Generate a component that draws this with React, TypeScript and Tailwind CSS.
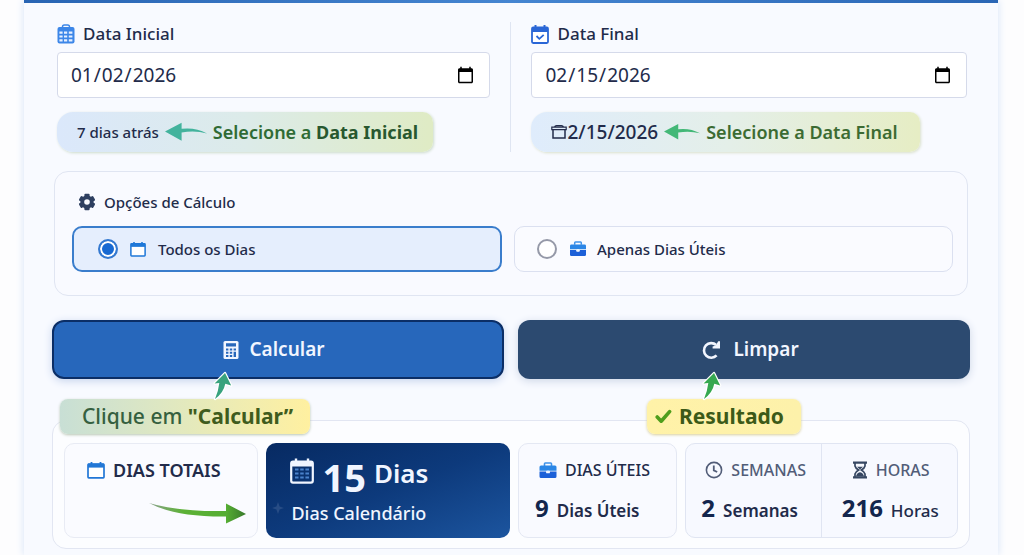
import { useState } from 'react';
import type { ReactNode } from 'react';

type IconProps = { className?: string };

function CalendarGridIcon({ className }: IconProps) {
    return (
        <svg className={className} viewBox="0 0 18 20" fill="none" aria-hidden="true">
            <path d="M5.5 4V2.8Q5.5 1 7.3 1h3.4q1.8 0 1.8 1.8V4" stroke="currentColor" strokeWidth="1.5" />
            <rect x="0.5" y="3" width="17" height="16.5" rx="2" fill="currentColor" />
            <path
                d="M2.4 7.6h3.2v2.2H2.4zM7 7.6h3.2v2.2H7zM11.8 7.6h3.6v2.2h-3.6zM2.4 11.4h3.2v2.2H2.4zM7 11.4h3.2v2.2H7zM11.8 11.4h3.6v2.2h-3.6zM2.4 15.2h3.2v2.2H2.4zM7 15.2h3.2v2.2H7zM11.8 15.2h3.6v2.2h-3.6z"
                fill="#e6f0ff"
            />
        </svg>
    );
}

function CalendarCheckIcon({ className }: IconProps) {
    return (
        <svg className={className} viewBox="0 0 18 20" fill="none" aria-hidden="true">
            <path d="M4.5 1v4M13.5 1v4" stroke="currentColor" strokeWidth="2" />
            <rect x="1" y="3.5" width="16" height="15.5" rx="1.2" fill="#fff" stroke="currentColor" strokeWidth="1.8" />
            <path d="M1 3h16v5H1z" fill="currentColor" />
            <path d="m5.5 12 2.8 2.8 4.4-4" stroke="currentColor" strokeWidth="1.8" />
        </svg>
    );
}

function CalendarIcon({ className }: IconProps) {
    return (
        <svg className={className} viewBox="0 0 18 18" fill="none" aria-hidden="true">
            <path d="M4.5 1v4M13.5 1v4" stroke="currentColor" strokeWidth="1.8" />
            <rect x="1" y="3" width="16" height="13.8" rx="0.8" fill="#fff" stroke="currentColor" strokeWidth="1.7" />
            <path d="M1 2.6h16v4H1z" fill="currentColor" />
        </svg>
    );
}

function BoxCalendarIcon({ className }: IconProps) {
    return (
        <svg className={className} viewBox="0 0 16 16" fill="none" stroke="currentColor" aria-hidden="true">
            <path d="M.8 3.2h14.4v2.4H.8zM3.5 3Q4 1.6 5.5 1.6h5q1.5 0 2 1.4" strokeWidth="1.2" />
            <path d="M2 5.4V14h12V5.4" strokeWidth="1.5" />
        </svg>
    );
}

function CalendarDaysIcon({ className }: IconProps) {
    return (
        <svg className={className} viewBox="0 0 24 26" fill="none" aria-hidden="true">
            <path d="M6 .5v5M18 .5v5" stroke="currentColor" strokeWidth="2.4" />
            <rect x="1.2" y="3.6" width="21.6" height="21" rx="1.8" stroke="currentColor" strokeWidth="2.2" />
            <path d="M1.5 3.5h21v5h-21z" fill="currentColor" />
            <path
                d="M5 11.5h3.5M10.2 11.5h3.5M15.4 11.5H19M5 15.5h3.5M10.2 15.5h3.5M15.4 15.5H19M5 19.5h3.5M10.2 19.5h3.5M15.4 19.5H19"
                stroke="#4a82cb"
                strokeWidth="2"
            />
        </svg>
    );
}

function BriefcaseIcon({ className }: IconProps) {
    return (
        <svg className={className} viewBox="0 0 18 17" fill="none" aria-hidden="true">
            <path d="M5.5 4V1.8q0-.8.8-.8h5.4q.8 0 .8.8V4" stroke="#3f93ea" strokeWidth="1.6" />
            <path d="M2 3.6h14q1.5 0 1.5 1.5v3.6H.5V5.1Q.5 3.6 2 3.6z" fill="#2b86e6" />
            <path d="M.5 9.6h6.6v.8q0 .9.9.9h2q.9 0 .9-.9v-.8h6.6v4.9q0 1.5-1.5 1.5H2Q.5 16 .5 14.5z" fill="#1c60d8" />
            <path d="M7.6 8.6h2.8v1.6H7.6z" fill="#eaf3ff" />
        </svg>
    );
}

function GearIcon({ className }: IconProps) {
    return (
        <svg className={className} viewBox="0 0 18 18" aria-hidden="true">
            <g fill="currentColor">
                <rect x="6.4" y="0.8" width="5.2" height="16.4" rx="1" />
                <rect x="6.4" y="0.8" width="5.2" height="16.4" rx="1" transform="rotate(60 9 9)" />
                <rect x="6.4" y="0.8" width="5.2" height="16.4" rx="1" transform="rotate(120 9 9)" />
                <circle cx="9" cy="9" r="6.6" />
            </g>
            <circle cx="9" cy="9" r="2.8" fill="#f8faff" />
        </svg>
    );
}

function CalculatorIcon({ className }: IconProps) {
    return (
        <svg className={className} viewBox="0 0 16 20" aria-hidden="true">
            <rect x="0.5" y="1" width="15" height="18" rx="1.6" fill="currentColor" />
            <path
                d="M3 3.2h10v3.3H3zM3 8.6h2.4v2H3zM6.8 8.6h2.4v2H6.8zM10.6 8.6H13v2h-2.4zM3 11.8h2.4v2H3zM6.8 11.8h2.4v2H6.8zM3 15h2.4v2H3zM6.8 15h2.4v2H6.8zM10.6 11.8H13V17h-2.4z"
                fill="#2767bb"
            />
        </svg>
    );
}

function RedoIcon({ className }: IconProps) {
    return (
        <svg className={className} viewBox="0 0 20 20" fill="none" aria-hidden="true">
            <path d="M15.6 15.4A7.3 7.3 0 1 1 15.2 5" stroke="currentColor" strokeWidth="2.6" />
            <path d="M19 1.2v7.4h-7.4V6.4l3.2-.8 2.4-4.4z" fill="currentColor" />
        </svg>
    );
}

function ClockIcon({ className }: IconProps) {
    return (
        <svg className={className} viewBox="0 0 18 18" fill="none" stroke="currentColor" aria-hidden="true">
            <circle cx="9" cy="9" r="7.6" strokeWidth="1.6" />
            <path d="M8.8 4.6v4.8l3.4 1.6" strokeWidth="1.8" />
        </svg>
    );
}

function HourglassIcon({ className }: IconProps) {
    return (
        <svg className={className} viewBox="0 0 16 18" fill="none" stroke="currentColor" aria-hidden="true">
            <path d="M1 1.6h14M1 16.4h14" strokeWidth="2.2" />
            <path d="M3 2v3Q3.4 7 6.6 9 3.4 11 3 13v3M13 2v3q-.4 2-3.6 4 3.2 2 3.6 4v3" strokeWidth="1.7" />
            <path d="M5 5.8h6L8 8.6zM4 15.4q.4-3.4 4-4.2 3.6.8 4 4.2z" fill="currentColor" stroke="none" />
        </svg>
    );
}

function CheckIcon({ className }: IconProps) {
    return (
        <svg className={className} viewBox="0 0 17 15" fill="none" aria-hidden="true">
            <path d="m2.2 8 4 4.2L14.6 2.6" stroke="#4f9e1c" strokeWidth="3.6" strokeLinecap="round" strokeLinejoin="round" />
        </svg>
    );
}

function ArrowLeft({ className }: IconProps) {
    return (
        <svg className={className} viewBox="0 0 43 20" fill="currentColor" aria-hidden="true">
            <path d="M0 9.5 17 .5v6.2q14-1.8 26 4.8-12-3.2-26-1v8.5z" />
        </svg>
    );
}

function ArrowUp({ className }: IconProps) {
    return (
        <svg className={className} viewBox="0 0 22 30" aria-hidden="true">
            <path
                d="M13 2 2.5 12.5l4.8-.4Q6.5 20 3 28q8.5-6 10.3-15.2l5.9 1.7z"
                fill="currentColor"
                stroke="#fff"
                strokeWidth="2.4"
                strokeLinejoin="round"
                paintOrder="stroke"
            />
        </svg>
    );
}

function LongArrow({ className }: IconProps) {
    return (
        <svg className={className} viewBox="0 0 98 22" aria-hidden="true">
            <defs>
                <linearGradient id="long-arrow" x1="0" x2="1" y1="0" y2="0">
                    <stop offset="0" stopColor="#8ba38c" />
                    <stop offset="0.35" stopColor="#5cb136" />
                    <stop offset="0.8" stopColor="#55ad33" />
                    <stop offset="1" stopColor="#37782b" />
                </linearGradient>
            </defs>
            <path d="M0 1q30 9 77 8V1.5L97 12 77 21.5V14.5Q26 15 0 1z" fill="url(#long-arrow)" />
        </svg>
    );
}

function SparkIcon({ className }: IconProps) {
    return (
        <svg className={className} viewBox="0 0 12 12" fill="currentColor" aria-hidden="true">
            <path d="M6 0 7.6 4.4 12 6 7.6 7.6 6 12 4.4 7.6 0 6l4.4-1.6z" />
        </svg>
    );
}

type DateFieldProps = {
    id: string;
    label: string;
    icon: ReactNode;
    value: string;
    onChange: (value: string) => void;
    children: ReactNode;
};

function DateField({ id, label, icon, value, onChange, children }: DateFieldProps) {
    return (
        <div className="min-w-0">
            <label htmlFor={id} className="flex h-6 items-center gap-2 text-[17px] font-medium">
                {icon}
                {label}
            </label>
            <input
                id={id}
                type="date"
                value={value}
                onChange={(e) => onChange(e.target.value)}
                className="mt-1.5 h-[46px] w-full rounded border border-[#d5daea] bg-white px-3 text-[19px]"
            />
            {children}
        </div>
    );
}

type OptionProps = {
    label: string;
    icon: ReactNode;
    checked: boolean;
    onSelect: () => void;
};

function Option({ label, icon, checked, onSelect }: OptionProps) {
    return (
        <label className="flex h-[46px] items-center rounded-[10px] border border-[#dbe0f0] bg-[#fafbff] pl-[22px] text-[15px] font-medium has-checked:border-2 has-checked:border-[#3a7dcc] has-checked:bg-[#e5eefd] has-checked:pl-6">
            <input
                type="radio"
                name="modo"
                checked={checked}
                onChange={onSelect}
                className="mr-3 size-5 shrink-0 appearance-none rounded-full border-2 border-[#9599a8] bg-white checked:border-[#3479d0] checked:bg-[#1769d2] checked:shadow-[inset_0_0_0_2px_white]"
            />
            {icon}
            {label}
        </label>
    );
}

function App() {
    const [start, setStart] = useState('2026-01-02');
    const [end, setEnd] = useState('2026-02-15');
    const [mode, setMode] = useState('todos');

    return (
        <div className="min-h-screen bg-[#fdfdfe] pr-[26px] pl-6 font-['Noto_Sans',sans-serif] text-[#222b4a]">
            <main className="min-h-screen bg-[#f8faff] pb-1.5 shadow-[0_0_8px_#d5e3f8]">
                <div className="h-[3px] bg-linear-to-r from-[#2864b3] via-[#4585d1] to-[#2a66b5]" />
                <div className="px-7 pt-[19px]">
                    <section className="grid grid-cols-[433fr_1px_435fr] gap-x-5 pr-[3px] pl-[5px]">
                        <DateField
                            id="inicio"
                            label="Data Inicial"
                            icon={<CalendarGridIcon className="h-5 w-[18px] text-[#3c86e8]" />}
                            value={start}
                            onChange={setStart}
                        >
                            <div className="mt-[14px] flex h-10 w-[376px] items-center rounded-l-2xl rounded-r-[10px] bg-linear-to-r from-[#dbe8fb] via-[#dcebe9] to-[#dfebc4] pl-5 shadow-[1px_1px_3px_#cddccb]">
                                <span className="text-[15px] font-medium">7 dias atrás</span>
                                <ArrowLeft className="mx-1.5 h-5 w-[42px] text-[#43b39d]" />
                                <span className="text-lg font-semibold whitespace-nowrap text-[#2f6b35]">
                                    Selecione a <b className="font-bold text-[#28582f]">Data Inicial</b>
                                </span>
                            </div>
                        </DateField>
                        <div className="bg-[#dfe5f2]" />
                        <DateField
                            id="fim"
                            label="Data Final"
                            icon={<CalendarCheckIcon className="h-5 w-[18px] text-[#2a66d6]" />}
                            value={end}
                            onChange={setEnd}
                        >
                            <div className="mt-[14px] flex h-10 w-[389px] items-center rounded-l-2xl rounded-r-[10px] bg-linear-to-r from-[#dfecfc] via-[#e4efe9] to-[#e6edc4] pl-5 shadow-[1px_1px_3px_#d9e0cb]">
                                <BoxCalendarIcon className="size-4" />
                                <span className="text-[19px] font-medium">2/15/2026</span>
                                <ArrowLeft className="mx-1.5 h-5 w-9 text-[#43b877]" />
                                <span className="text-lg font-semibold whitespace-nowrap text-[#3c6b33]">
                                    Selecione a Data Final
                                </span>
                            </div>
                        </DateField>
                    </section>

                    <fieldset className="mx-[2px] mt-[19px] rounded-[14px] border border-[#e0e5f2] bg-[#f9faff] pt-5 pr-[14px] pb-[23px] pl-[17px]">
                        <div className="flex h-5 items-center gap-2 pl-1.5 text-[15px] font-medium">
                            <GearIcon className="size-[18px] text-[#2e3f60]" />
                            Opções de Cálculo
                        </div>
                        <div className="mt-[14px] grid grid-cols-[430fr_439fr] gap-3">
                            <Option
                                label="Todos os Dias"
                                icon={<CalendarIcon className="mr-3 size-4 text-[#1f78d8]" />}
                                checked={mode === 'todos'}
                                onSelect={() => setMode('todos')}
                            />
                            <Option
                                label="Apenas Dias Úteis"
                                icon={<BriefcaseIcon className="mr-[10px] h-4 w-[18px]" />}
                                checked={mode === 'uteis'}
                                onSelect={() => setMode('uteis')}
                            />
                        </div>
                    </fieldset>

                    <div className="mt-6 grid grid-cols-2 gap-[14px] text-[19px] font-semibold text-[#f2f6ff]">
                        <button
                            type="button"
                            className="flex h-[59px] items-center justify-center gap-[10px] rounded-xl border-2 border-[#0b2e66] bg-[#2767bb] pr-2 shadow-[0_2px_8px_#c5d3ec]"
                        >
                            <CalculatorIcon className="h-5 w-4" />
                            Calcular
                        </button>
                        <button
                            type="button"
                            className="flex h-[59px] items-center justify-center gap-3 rounded-xl bg-[#2c4a70] pl-3 shadow-[0_2px_8px_#cdd6e6]"
                        >
                            <RedoIcon className="size-5" />
                            Limpar
                        </button>
                    </div>

                    <div className="relative z-10 mt-5 grid grid-cols-2 gap-[14px]">
                        <div className="relative ml-2 flex h-[35px] w-[250px] items-center rounded-lg bg-linear-to-r from-[#c8dfd5] via-[#e3e9bd] to-[#fff0a0] pl-[22px] text-[21px] font-medium whitespace-pre text-[#35603f] shadow-[0_1px_3px_#b9c6b4]">
                            Clique em <b className="font-bold text-[#3f5c1d]">"Calcular”</b>
                            <ArrowUp className="absolute bottom-full left-[152px] -mb-0.5 h-[30px] w-[22px] text-[#38a27e]" />
                        </div>
                        <div className="relative ml-[129px] flex h-[35px] w-[154px] items-center gap-[7px] rounded-lg bg-linear-to-r from-[#fff2a8] to-[#fdf1aa] pl-2 text-[21px] font-bold text-[#3c5a18] shadow-[0_1px_3px_#d8cf9c]">
                            <CheckIcon className="h-[15px] w-[17px]" />
                            Resultado
                            <ArrowUp className="absolute bottom-full left-[54px] -mb-0.5 h-[30px] w-[22px] text-[#35a850]" />
                        </div>
                    </div>

                    <section className="-mt-[14px] grid grid-cols-[194fr_243fr_159fr_272fr] gap-2 rounded-[14px] border border-[#e2e6f2] bg-[#fcfdff] px-[11px] pt-[22px] pb-[10px]">
                        <div className="h-[95px] rounded-[10px] border border-[#e8ebf4] bg-[#fafbff] pt-[14px] pl-[22px]">
                            <h2 className="flex h-6 items-center gap-2 text-lg font-semibold whitespace-nowrap">
                                <CalendarIcon className="size-[18px] text-[#2277d6]" />
                                DIAS TOTAIS
                            </h2>
                            <LongArrow className="mt-5 ml-[62px] h-[22px] w-[98px]" />
                        </div>
                        <div className="relative h-[95px] rounded-[10px] bg-linear-to-br from-[#072a62] via-[#0d3a7c] to-[#1c559f] pt-3 pl-6 text-[#f0f5ff]">
                            <SparkIcon className="absolute bottom-6 left-1.5 size-3 text-[#274c85]" />
                            <p className="flex h-11 items-center">
                                <CalendarDaysIcon className="mr-2 mb-3 h-[26px] w-6" />
                                <b className="mr-2 text-[38px] leading-[44px] font-bold">15</b>
                                <span className="mb-2 text-[26px] leading-8 font-semibold">Dias</span>
                            </p>
                            <p className="mt-0.5 pl-px text-lg leading-6 font-medium">Dias Calendário</p>
                        </div>
                        <div className="h-[95px] rounded-[10px] border border-[#e4e8f3] bg-[#f9faff] pt-[14px] pl-4">
                            <h2 className="flex h-6 items-center gap-2 pl-1 text-base font-medium">
                                <BriefcaseIcon className="h-[17px] w-[18px]" />
                                DIAS ÚTEIS
                            </h2>
                            <p className="mt-[10px] flex items-baseline gap-2 text-[17px] leading-8 font-semibold">
                                <b className="text-2xl leading-8 font-bold text-[#13264d]">9</b>
                                Dias Úteis
                            </p>
                        </div>
                        <div className="grid h-[95px] grid-cols-2 divide-x divide-[#e0e5f2] rounded-[10px] border border-[#e0e5f2] bg-[#f7f9ff]">
                            <div className="pt-[14px] pl-[15px]">
                                <h2 className="flex h-6 items-center gap-2 pl-1 text-base font-medium text-[#525d78]">
                                    <ClockIcon className="size-[18px]" />
                                    SEMANAS
                                </h2>
                                <p className="mt-[10px] flex items-baseline gap-2 text-[17px] leading-8 font-semibold">
                                    <b className="text-2xl leading-8 font-bold text-[#13264d]">2</b>
                                    Semanas
                                </p>
                            </div>
                            <div className="pt-[14px] pl-5">
                                <h2 className="flex h-6 items-center gap-2 pl-[10px] text-base font-medium text-[#525d78]">
                                    <HourglassIcon className="h-[18px] w-4 text-[#364762]" />
                                    HORAS
                                </h2>
                                <p className="mt-[10px] flex items-baseline gap-2 text-[17px] leading-8 font-medium">
                                    <b className="text-2xl leading-8 font-bold text-[#13264d]">216</b>
                                    Horas
                                </p>
                            </div>
                        </div>
                    </section>
                </div>
            </main>
        </div>
    );
}

export default App;
